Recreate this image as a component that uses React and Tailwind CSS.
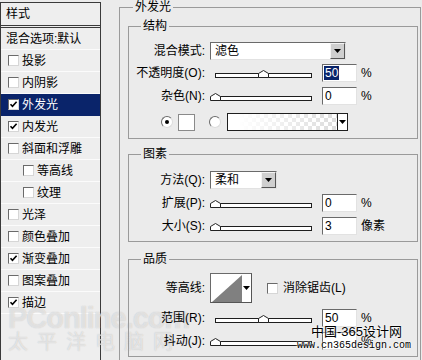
import React from 'react';

const items = [
    { name: '投影' },
    { name: '内阴影' },
    { name: '外发光', checked: true, active: true },
    { name: '内发光', checked: true },
    { name: '斜面和浮雕' },
    { name: '等高线', sub: true },
    { name: '纹理', sub: true },
    { name: '光泽' },
    { name: '颜色叠加' },
    { name: '渐变叠加', checked: true },
    { name: '图案叠加' },
    { name: '描边', checked: true },
];

const Check = ({ checked }) => (
    <span className="w-[11px] h-[11px] shrink-0 bg-white border border-t-[#6a6a6a] border-l-[#6a6a6a] border-r-[#d6d6d6] border-b-[#d6d6d6] flex items-center justify-center">
        {checked && (
            <svg width="9" height="9" viewBox="0 0 9 9">
                <path d="M1.5 4.2 L3.5 6.4 L7.6 1.8" fill="none" stroke="#000" strokeWidth="1.6" />
            </svg>
        )}
    </span>
);

const Radio = ({ on }) => (
    <span className="w-[12px] h-[12px] shrink-0 rounded-full bg-white border border-t-[#6a6a6a] border-l-[#6a6a6a] border-r-[#dcdcdc] border-b-[#dcdcdc] flex items-center justify-center">
        {on && <span className="w-[4px] h-[4px] rounded-full bg-black" />}
    </span>
);

const Arrow = () => (
    <svg width="7" height="4" viewBox="0 0 7 4">
        <path d="M0 0 H7 L3.5 4 Z" fill="#000" />
    </svg>
);

const Select = ({ value, width }) => (
    <div className={`${width} h-[18px] bg-white border border-t-[#6a6a6a] border-l-[#6a6a6a] border-r-[#e2e2e2] border-b-[#e2e2e2] flex items-center justify-between`}>
        <span className="pl-[4px] leading-none">{value}</span>
        <span className="w-[15px] h-[16px] bg-[#cfcfcf] border border-t-[#f4f4f4] border-l-[#f4f4f4] border-r-[#555] border-b-[#555] flex items-center justify-center">
            <Arrow />
        </span>
    </div>
);

const Slider = ({ thumb }) => (
    <div className="relative w-[102px] h-[18px]">
        <div className="ml-[5px] mt-[9px] h-[5px] border border-[#1e1e1e] bg-white" />
        <svg className={`absolute top-[6px] ${thumb}`} width="11" height="8" viewBox="0 0 11 8">
            <path d="M0.5 7.5 V3.5 L5.5 0.5 L10.5 3.5 V7.5 Z" fill="#fff" stroke="#222" />
        </svg>
    </div>
);

const Field = ({ value, selected }) => (
    <div className="ml-[10px] w-[35px] h-[18px] bg-white border border-t-[#6a6a6a] border-l-[#6a6a6a] border-r-[#e2e2e2] border-b-[#e2e2e2] flex items-center pl-[1px]">
        <span className={selected ? 'bg-[#0a246a] text-white leading-[14px] px-[1px]' : 'leading-none px-[1px]'}>{value}</span>
    </div>
);

const Row = ({ label, className = '', children }) => (
    <div className={`flex items-center ${className}`}>
        <span className="w-[76px] shrink-0 text-right">{label}</span>
        <div className="ml-[5px] flex items-center">{children}</div>
    </div>
);

const SliderRow = ({ label, thumb, value, unit, selected, className }) => (
    <Row label={label} className={className}>
        <Slider thumb={thumb} />
        <Field value={value} selected={selected} />
        <span className="ml-[4px]">{unit}</span>
    </Row>
);

const App = () => {
    return (
        <div className="relative w-[422px] h-[360px] overflow-hidden bg-[#ebebeb] flex text-[12px] leading-[18px] text-black font-['Liberation_Sans','Noto_Sans_CJK_SC',sans-serif]">
            {/* style list */}
            <aside className="w-[101px] shrink-0 mt-[2px] border border-b-0 border-[#3a3a3a] bg-[#eeeeee]">
                <div className="h-[25px] flex items-center pl-[5px] border-b-[3px] border-double border-[#3a3a3a]">样式</div>
                <div className="h-[22px] flex items-center pl-[5px] border-b border-[#fbfbfb]">混合选项:默认</div>
                {items.map((it) => (
                    <div
                        key={it.name}
                        className={`h-[22px] flex items-center gap-[3px] border-b ${it.sub ? 'pl-[22px]' : 'pl-[7px]'} ${it.active ? 'bg-[#0a246a] text-white border-[#0a246a]' : 'border-[#fbfbfb]'}`}
                    >
                        <Check checked={it.checked} />
                        <span>{it.name}</span>
                    </div>
                ))}
            </aside>

            {/* faint site watermark, drawn under the dialog controls */}
            <div className="absolute z-0 left-[8px] top-[303px] text-[29px] leading-[30px] font-bold tracking-[-1px] text-white/55 [text-shadow:0_0_1px_rgba(150,150,150,0.6)] font-['Liberation_Sans',sans-serif] pointer-events-none">
                PConline.com
            </div>
            <div className="absolute z-0 left-[8px] top-[330px] text-[20px] leading-[22px] tracking-[9px] text-white/55 [text-shadow:0_0_1px_rgba(150,150,150,0.6)] font-['Noto_Sans_CJK_SC',sans-serif] pointer-events-none">
                太平洋电脑网
            </div>

            <main className="relative z-10 pl-[18px]">
                <fieldset className="w-[302px] border border-[#9a9a9a] pl-[8px] pr-[2px] pt-[4px] pb-[20px]">
                    <legend className="ml-[5px] px-[2px] leading-[15px]">外发光</legend>

                    <fieldset className="border border-[#9a9a9a] pt-[8px] pb-[7px]">
                        <legend className="ml-[12px] px-[2px] leading-[15px]">结构</legend>
                        <Row label="混合模式:">
                            <Select value="滤色" width="w-[136px]" />
                        </Row>
                        <SliderRow label="不透明度(O):" thumb="left-[48px]" value="50" unit="%" selected className="mt-[4px]" />
                        <SliderRow label="杂色(N):" thumb="left-0" value="0" unit="%" className="mt-[5px]" />
                        <div className="mt-[8px] h-[18px] flex items-center">
                            <span className="ml-[32px]"><Radio on /></span>
                            <span className="ml-[5px] w-[17px] h-[17px] bg-white border border-[#8a8a8a]" />
                            <span className="ml-[14px]"><Radio /></span>
                            <div className="ml-[6px] w-[121px] h-[18px] border border-[#1e1e1e] flex bg-white">
                                <div className="flex-1 bg-[repeating-conic-gradient(#dcdcdc_0_25%,#ffffff_0_50%)] bg-[length:8px_8px]">
                                    <div className="h-full bg-linear-to-r from-white from-10% to-transparent" />
                                </div>
                                <div className="w-[10px] border-l border-[#1e1e1e] flex items-center justify-center">
                                    <Arrow />
                                </div>
                            </div>
                        </div>
                    </fieldset>

                    <fieldset className="mt-[8px] border border-[#9a9a9a] pt-[9px] pb-[6px]">
                        <legend className="ml-[12px] px-[2px] leading-[15px]">图素</legend>
                        <Row label="方法(Q):">
                            <Select value="柔和" width="w-[67px]" />
                        </Row>
                        <SliderRow label="扩展(P):" thumb="left-0" value="0" unit="%" className="mt-[5px]" />
                        <SliderRow label="大小(S):" thumb="left-0" value="3" unit="像素" className="mt-[5px]" />
                    </fieldset>

                    <fieldset className="mt-[10px] border border-[#9a9a9a] pt-[6px] pb-[6px]">
                        <legend className="ml-[12px] px-[2px] leading-[15px]">品质</legend>
                        <Row label="等高线:">
                            <div className="w-[42px] h-[30px] bg-white border border-t-[#6a6a6a] border-l-[#6a6a6a] border-r-[#555] border-b-[#555] flex">
                                <svg width="31" height="28" viewBox="0 0 31 28">
                                    <path d="M1 28 L31 1 L31 28 Z" fill="#808080" />
                                </svg>
                                <div className="flex-1 flex items-center justify-center">
                                    <Arrow />
                                </div>
                            </div>
                            <span className="ml-[15px]"><Check /></span>
                            <span className="ml-[5px]">消除锯齿(L)</span>
                        </Row>
                        <SliderRow label="范围(R):" thumb="left-[48px]" value="50" unit="%" className="mt-[6px]" />
                        <SliderRow label="抖动(J):" thumb="left-0" value="" unit="%" className="mt-[5px]" />
                    </fieldset>
                </fieldset>
            </main>

            <div className="absolute z-20 left-[311px] top-[324px] text-[13px] leading-[15px] text-black [text-shadow:0_0_2px_#fff,0_0_2px_#fff]">
                中国-365设计网
            </div>
            <div className="absolute z-20 left-[297px] top-[340px] text-[10px] leading-[12px] text-black font-['Liberation_Mono',monospace] [text-shadow:0_0_2px_#fff,0_0_2px_#fff]">
                www.cn365design.com
            </div>
        </div>
    );
};

export default App;
